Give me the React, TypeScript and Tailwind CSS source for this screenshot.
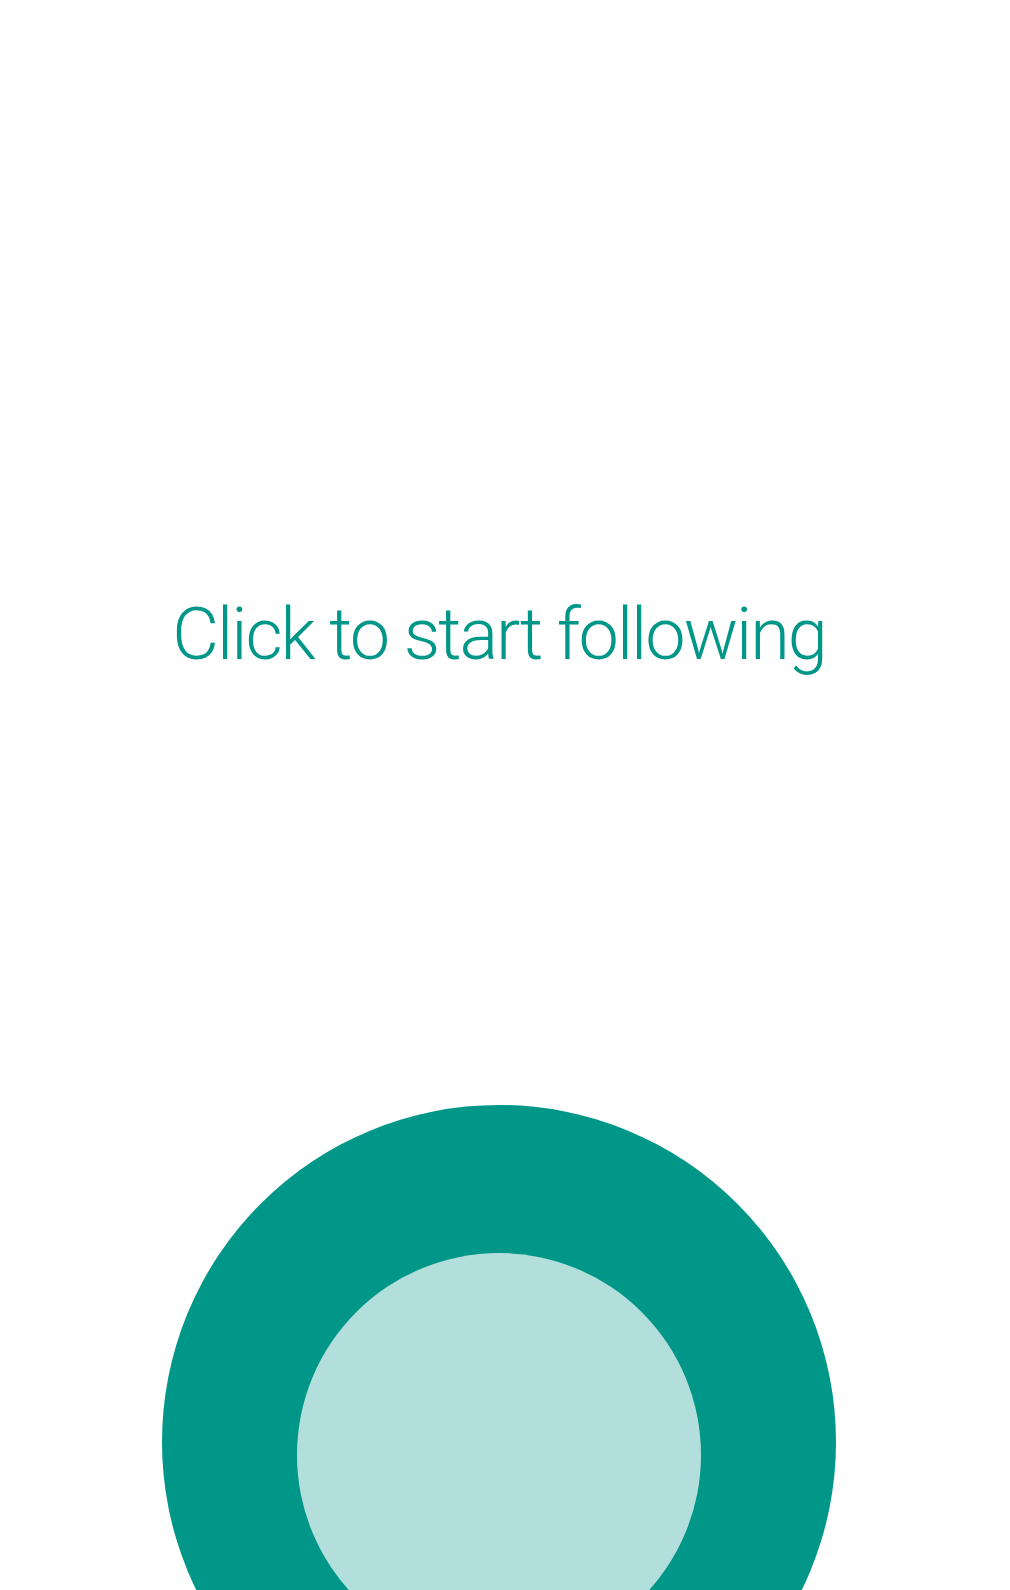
export default function App() {
  return (
    <div className="h-[1590px] w-[1010px] overflow-hidden bg-white">
      <div className="flex w-[998px] flex-col items-center pt-[599px]">
        <button
          type="button"
          className="text-[72px] font-light leading-none tracking-[-2px] text-[#009688]"
          style={{ fontFamily: "Roboto, 'Liberation Sans', sans-serif" }}
        >
          Click to start following
        </button>
        <div className="mt-[434px] flex h-[674px] w-[674px] shrink-0 items-center justify-center rounded-full bg-[#009688]">
          <div className="mt-[26px] h-[404px] w-[404px] rounded-full bg-[#b2dfdb]" />
        </div>
      </div>
    </div>
  );
}
